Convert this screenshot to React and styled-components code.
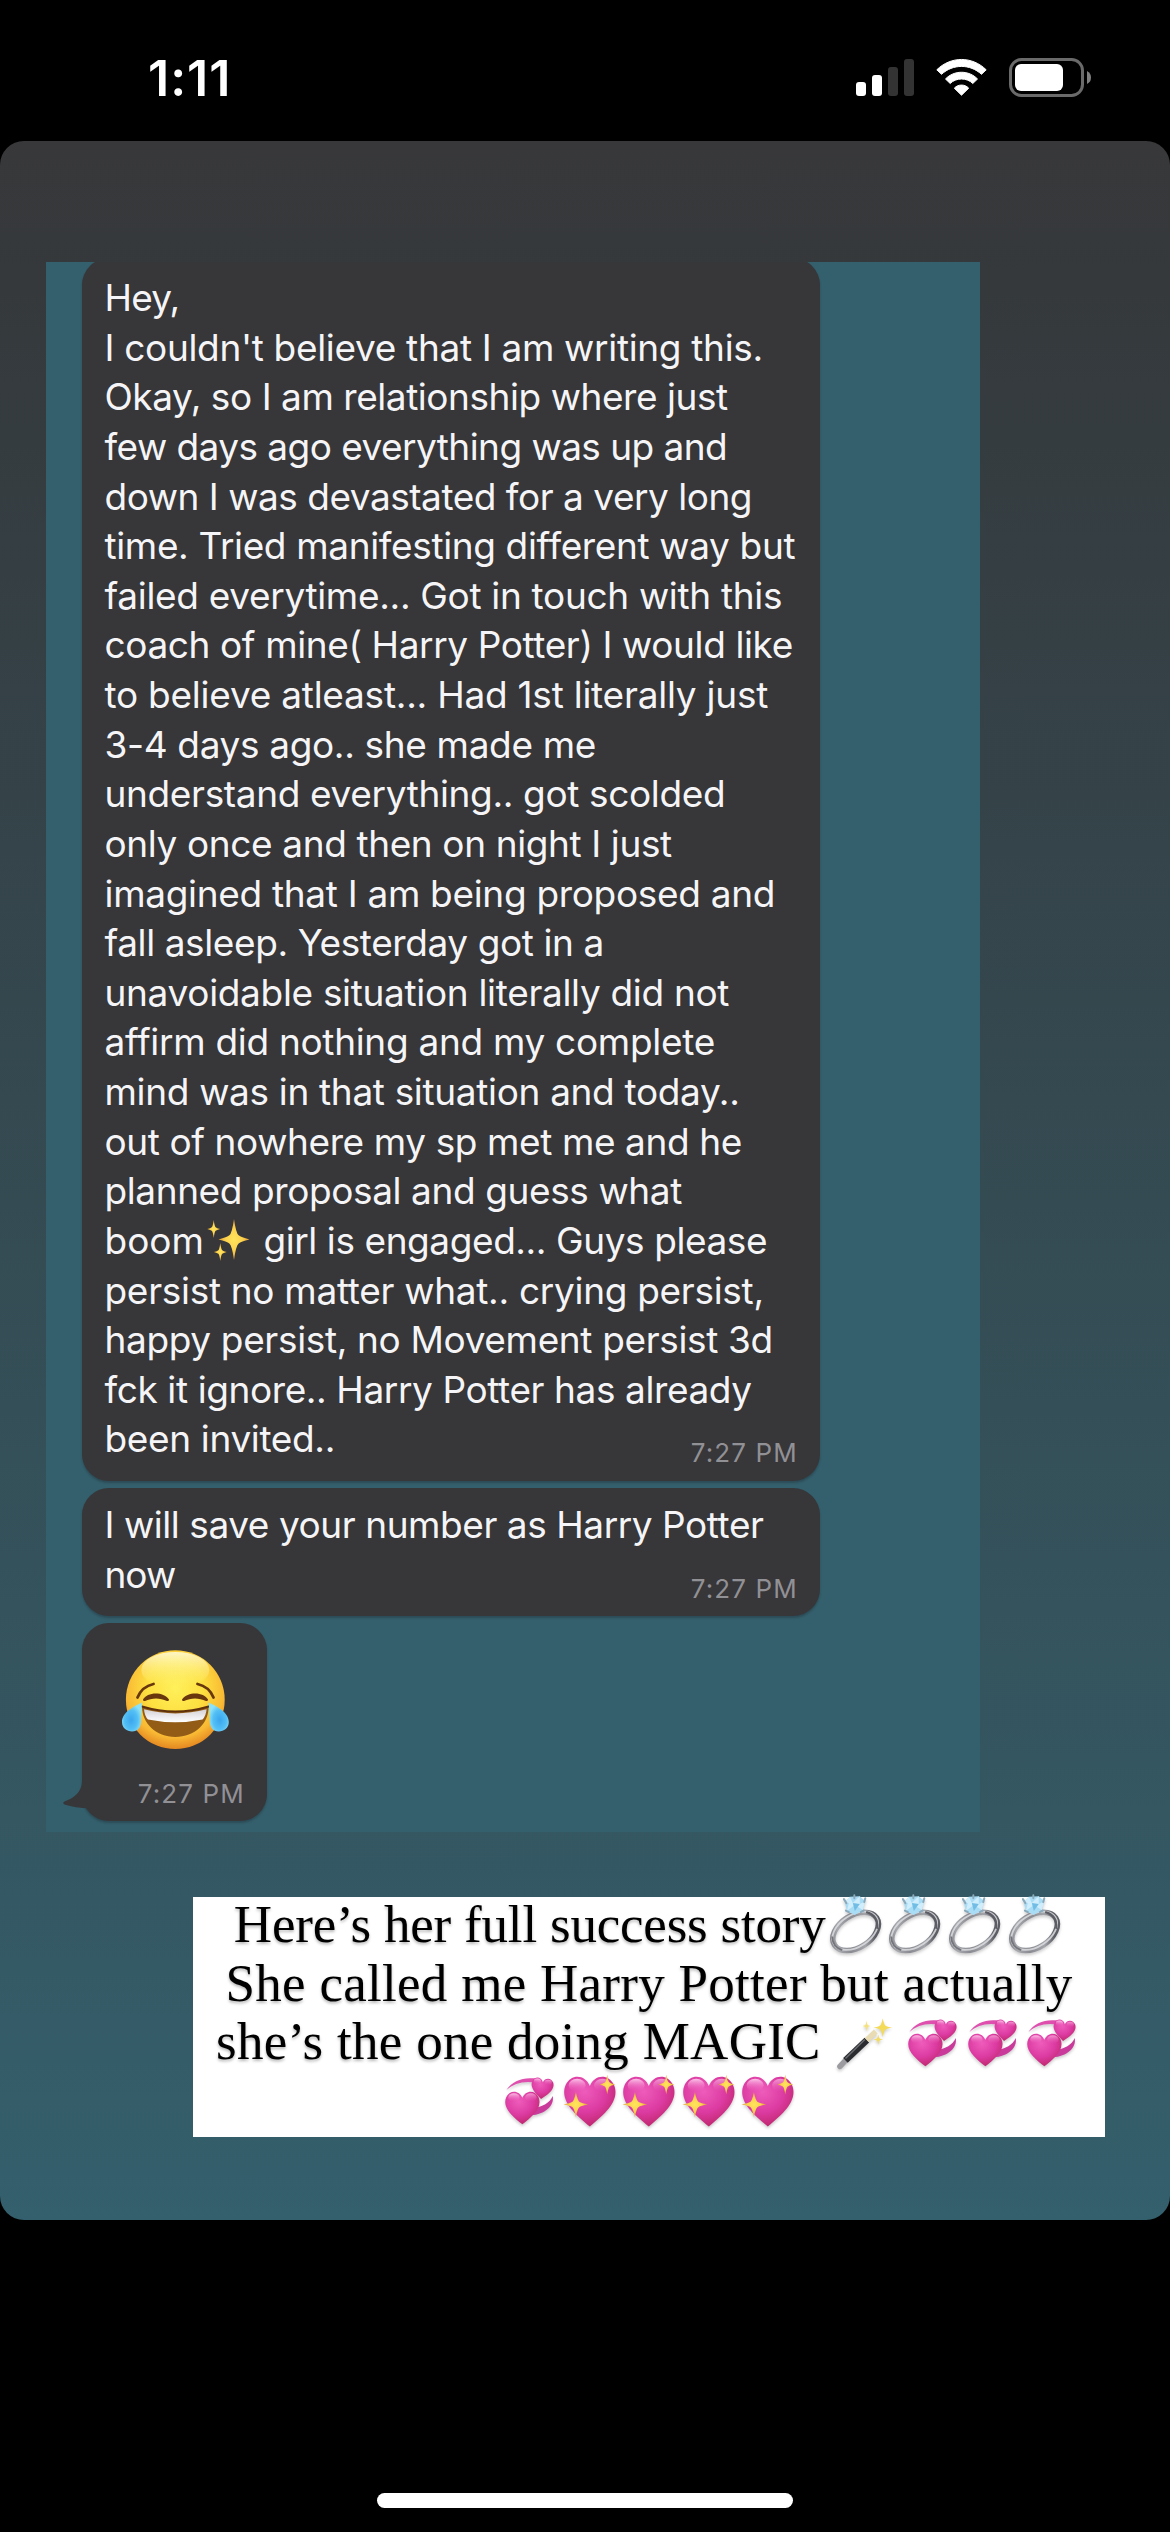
import React from "react"
import styled, { createGlobalStyle } from "styled-components"

const GlobalStyle = createGlobalStyle`
  body {
    margin: 0;
    background: #000;
  }
  svg {
    display: block;
    flex: none;
    overflow: visible;
  }
`

const Screen = styled.div`
  box-sizing: border-box;
  width: 1170px;
  height: 2532px;
  display: flex;
  flex-direction: column;
  background: #000;
  overflow: hidden;
  font-family: Inter, "Liberation Sans", sans-serif;
`

const StatusBar = styled.header`
  box-sizing: border-box;
  height: 141px;
  padding: 47px 79px 0 148px;
  display: flex;
  justify-content: space-between;
  align-items: flex-start;
  .clock {
    color: #fff;
    font-size: 50px;
    line-height: 62px;
    font-weight: 600;
    letter-spacing: 1px;
  }
  .icons {
    display: flex;
    align-items: center;
    padding-top: 11px;
  }
  .wifi {
    margin: 0 22px;
  }
`

const Story = styled.main`
  box-sizing: border-box;
  height: 2079px;
  padding: 121px 65px 0 46px;
  display: flex;
  flex-direction: column;
  border-radius: 24px;
  background: linear-gradient(#38383a 0%, #35393c 7%, #345f6c 100%);
`

const Chat = styled.section`
  box-sizing: border-box;
  width: 934px;
  height: 1570px;
  padding-left: 36px;
  display: flex;
  flex-direction: column;
  align-items: flex-start;
  gap: 7px;
  background: #345f6c;
  overflow: hidden;
`

const Bubble = styled.div`
  position: relative;
  box-sizing: border-box;
  width: ${({ $width }) => $width}px;
  height: ${({ $height }) => $height}px;
  margin-top: ${({ $lift }) => ($lift ? -$lift : 0)}px;
  padding: ${({ $top }) => $top}px 22px 12px 22.5px;
  border-radius: 27px;
  background: #373639;
  box-shadow: 0 2px 2px rgba(30, 40, 48, 0.35);
`

const Line = styled.div`
  height: 49.64px;
  display: flex;
  align-items: flex-start;
  color: #f5f5f7;
  font-size: 37px;
  line-height: 49.64px;
  white-space: pre;
`

const Words = styled.span`
  letter-spacing: ${({ $track }) => $track}px;
`

const Stamp = styled.time`
  margin-left: auto;
  padding-top: ${({ $drop }) => $drop || 0}px;
  color: #919095;
  font-size: 26px;
  line-height: 30px;
  letter-spacing: 1.15px;
`

const Reaction = styled.div`
  height: 100%;
  display: flex;
  flex-direction: column;
  justify-content: space-between;
  .face {
    margin-left: 17px;
  }
`

const Tail = styled.svg`
  position: absolute;
  left: -19px;
  bottom: 9px;
`

const Caption = styled.section`
  box-sizing: border-box;
  width: 912px;
  height: 240px;
  margin: 65px 0 0 147px;
  background: #fff;
  .lines {
    margin-top: -2px;
    display: flex;
    flex-direction: column;
    align-items: center;
  }
`

const CaptionLine = styled.div`
  height: 58.67px;
  display: flex;
  align-items: center;
  color: #000;
  font-family: "Liberation Serif", serif;
  font-size: 53px;
  line-height: 58.67px;
  white-space: pre;
  text-shadow: 0 2px 3px rgba(0, 0, 0, 0.28);
  svg {
    filter: drop-shadow(0 2px 1.5px rgba(0, 0, 0, 0.2));
  }
  .wand {
    margin-right: 9px;
  }
`

const HomeBar = styled.div`
  width: 416px;
  height: 15px;
  margin: 273px auto 0;
  border-radius: 8px;
  background: #fff;
`

// each entry is a line with its letter spacing
const story = [
  ["Hey,", -0.8],
  ["I couldn't believe that I am writing this.", -0.32],
  ["Okay, so I am relationship where just", -0.45],
  ["few days ago everything was up and", -0.55],
  ["down I was devastated for a very long", -0.48],
  ["time. Tried manifesting different way but", -0.36],
  ["failed everytime... Got in touch with this", -0.32],
  ["coach of mine( Harry Potter) I would like", -0.39],
  ["to believe atleast... Had 1st literally just", -0.24],
  ["3-4 days ago.. she made me", -0.34],
  ["understand everything.. got scolded", -0.35],
  ["only once and then on night I just", -0.38],
  ["imagined that I am being proposed and", -0.31],
  ["fall asleep. Yesterday got in a", -0.4],
  ["unavoidable situation literally did not", -0.32],
  ["affirm did nothing and my complete", -0.3],
  ["mind was in that situation and today..", -0.33],
  ["out of nowhere my sp met me and he", -0.4],
  ["planned proposal and guess what", -0.4],
  ["boom", 0, " girl is engaged... Guys please", -0.42],
  ["persist no matter what.. crying persist,", -0.3],
  ["happy persist, no Movement persist 3d", -0.35],
  ["fck it ignore.. Harry Potter has already", -0.4],
  ["been invited..", -0.35],
]

const reply = [
  ["I will save your number as Harry Potter", -0.44],
  ["now", -1],
]

const HEART =
  "M0 -9 C-3 -17 -13 -18 -17 -10 C-22 1 -10 11 0 19 C10 11 22 1 17 -10 C13 -18 3 -17 0 -9Z"

const Star = ({ x, y, rx, ry = rx, fill = "url(#gold)" }) => (
  <path
    transform={`translate(${x} ${y}) scale(${rx} ${ry})`}
    d="M0 -1 Q.13 -.3 .3 -.2 Q.45 -.1 1 0 Q.45 .1 .3 .2 Q.13 .3 0 1 Q-.13 .3 -.3 .2 Q-.45 .1 -1 0 Q-.45 -.1 -.3 -.2 Q-.13 -.3 0 -1Z"
    fill={fill}
  />
)

const Gradients = () => (
  <svg width="0" height="0" aria-hidden="true">
    <defs>
      <radialGradient id="gold">
        <stop offset="0" stopColor="#ffe45c" />
        <stop offset="0.55" stopColor="#fcd14e" />
        <stop offset="1" stopColor="#dd9a35" />
      </radialGradient>
      <radialGradient id="face" cx="0.5" cy="0.38" r="0.64">
        <stop offset="0" stopColor="#fff05a" />
        <stop offset="0.45" stopColor="#fddf40" />
        <stop offset="0.78" stopColor="#f9b934" />
        <stop offset="1" stopColor="#e07f1e" />
      </radialGradient>
      <linearGradient id="shine" x2="0" y2="1">
        <stop offset="0" stopColor="#fffde0" />
        <stop offset="1" stopColor="#fff46e" stopOpacity="0" />
      </linearGradient>
      <linearGradient id="teeth" x2="0" y2="1">
        <stop offset="0" stopColor="#d5d1d6" />
        <stop offset="1" stopColor="#ffffff" />
      </linearGradient>
      <radialGradient id="tear" cx="0.45" cy="0.6" r="0.55">
        <stop offset="0" stopColor="#3aa6ee" />
        <stop offset="0.6" stopColor="#53bff5" />
        <stop offset="1" stopColor="#8ee2f7" />
      </radialGradient>
      <radialGradient id="pink" cx="0.4" cy="0.3" r="0.75">
        <stop offset="0" stopColor="#ee5cbb" />
        <stop offset="0.55" stopColor="#dc3ba1" />
        <stop offset="1" stopColor="#bd2568" />
      </radialGradient>
      <linearGradient id="gloss" x2="0" y2="1">
        <stop offset="0" stopColor="#fbc3e8" />
        <stop offset="1" stopColor="#ee5cbb" stopOpacity="0" />
      </linearGradient>
      <linearGradient id="silver" x2="1" y2="0.4">
        <stop offset="0" stopColor="#72737a" />
        <stop offset="0.25" stopColor="#a9aab0" />
        <stop offset="0.5" stopColor="#8a8b92" />
        <stop offset="0.8" stopColor="#a3a4aa" />
        <stop offset="1" stopColor="#5c5d65" />
      </linearGradient>
    </defs>
  </svg>
)

const Sparkles = () => (
  <svg width="49.5" height="49.64" viewBox="0 0 49.5 49.64">
    <Star x={30} y={23.4} rx={15.5} ry={20.5} />
    <Star x={9.7} y={13} rx={6.5} ry={9} />
    <Star x={16.3} y={36} rx={6.5} ry={9} />
  </svg>
)

const Tear = () => (
  <path d="M20 52.5 C13 56 0 62 0 72 C0 78 5 81.5 10 81.5 C16 81.5 18.5 77.5 19 72 Z" fill="url(#tear)" />
)

const JoyFace = () => (
  <svg className="face" width="107" height="100" viewBox="0 0 107 100">
    <circle cx="53.3" cy="49.7" r="49.4" fill="url(#face)" />
    <ellipse cx="53.3" cy="20" rx="34" ry="18" fill="url(#shine)" opacity="0.85" />
    <g fill="none" stroke="#68370d" strokeLinecap="round">
      <path d="M15.5 47.5 Q20 36.5 31.5 34" strokeWidth="2.8" />
      <path d="M91.5 47.5 Q87 36.5 75.5 34" strokeWidth="2.8" />
    </g>
    <g fill="#68370d">
      <path d="M21 49.5 C25 42 41 41 47 49.5 Q47 51.5 45 51 C38 47.5 30 47.5 23 51 Q21 51.5 21 49.5Z" />
      <path d="M60 49.5 C66 41 82 42 86 49.5 Q86 51.5 84 51 C77 47.5 69 47.5 62 51 Q60 51.5 60 49.5Z" />
    </g>
    <path d="M20 56.5 Q53.3 66.5 86.6 56.5 C87 73 73 87 53.3 87 C34 87 20 73 20 56.5Z" fill="#925c17" />
    <path d="M20 56.5 Q53.3 66.5 86.6 56.5" fill="none" stroke="#5f300c" strokeWidth="2" strokeLinecap="round" />
    <path d="M22 59.3 Q53.3 67.5 84.6 59.3 Q84 66 80.5 69.5 Q53.3 75 26 69.5 Q22.5 66 22 59.3Z" fill="url(#teeth)" />
    <Tear />
    <g transform="translate(106.8 0) scale(-1 1)">
      <Tear />
    </g>
  </svg>
)

const Ring = () => (
  <svg width="59.67" height="60" viewBox="0 0 60 60">
    <g transform="rotate(-33 29.5 37)" fill="none">
      <ellipse cx="29.5" cy="37.5" rx="25.2" ry="16.2" stroke="url(#silver)" strokeWidth="5.6" />
      <ellipse cx="29.5" cy="36.8" rx="25.4" ry="16" stroke="#dcdde1" strokeWidth="1.8" opacity="0.85" />
      <path d="M49 27 Q58 37 49 47" stroke="#5b5c64" strokeWidth="2" />
      <path d="M8 46 Q1.5 38 7 29" stroke="#74757c" strokeWidth="1.8" />
    </g>
    <path d="M19 8 L24 2.5 L34 2 L39.5 7 L37 16 L29 21 L21 17Z" fill="#a9dcf5" />
    <path d="M24 2.5 L27 9 L34 2 L34 10 L39.5 7 L37 16 L29 11 L21 17 L23 9 L19 8Z" fill="#d0edfb" />
    <path d="M27 9 L34 10 L29 17Z" fill="#72bde6" />
    <path
      d="M18 5 l2.5 4 M39.5 4 l-1 4 M23 18 l-3 -1.5 M35 18 l3 -1.5 M28.5 1 v3"
      stroke="#8aa9bb"
      strokeWidth="2"
      strokeLinecap="round"
    />
  </svg>
)

const Wand = () => (
  <svg className="wand" width="59.67" height="60" viewBox="0 0 60 60">
    <path d="M6 54.5 L13 47" stroke="#9b9ba0" strokeWidth="5.6" strokeLinecap="round" />
    <path d="M11.5 48.5 L33 28" stroke="#2b2c30" strokeWidth="6.6" />
    <path d="M11.5 46.5 L31 27.5" stroke="#6d6e73" strokeWidth="1.4" />
    <path d="M33 28 L42 19.5" stroke="#e9dcb3" strokeWidth="5.4" />
    <Star x={49} y={15.5} rx={9.5} fill="#f3da57" />
    <Star x={32.7} y={14} rx={4} ry={5.5} fill="#f5e27c" />
    <Star x={44.5} y={27.5} rx={5} fill="#f3dc66" />
  </svg>
)

const Heart = ({ transform }) => (
  <g transform={transform}>
    <path d={HEART} fill="url(#pink)" />
    <ellipse cx="-9" cy="-9.5" rx="6" ry="4.5" fill="url(#gloss)" />
    <ellipse cx="9" cy="-9.5" rx="6" ry="4.5" fill="url(#gloss)" opacity="0.7" />
  </g>
)

const RevolvingHearts = () => (
  <svg width="59.67" height="60" viewBox="0 0 60 60">
    <path d="M6.5 20 C12 11 24 6.5 36 8.5 L36 12.5 C24 10.5 14 13 6.5 20Z" fill="#df4fae" />
    <path d="M53 26 C55 36 45 44.5 31 45.5 L33 38 C43 37 50 33 53 26Z" fill="#c93a9b" />
    <Heart transform="translate(42.5 17.5) rotate(6) scale(0.61)" />
    <Heart transform="translate(22.5 36.4) scale(0.95)" />
  </svg>
)

const SparklingHeart = () => (
  <svg width="59.67" height="60" viewBox="0 0 60 60">
    <Heart transform="translate(30 29) scale(1.42 1.45)" />
    <Star x={16} y={34.5} rx={12.5} />
    <Star x={47.5} y={14.5} rx={8} ry={10} />
  </svg>
)

const repeat = (Icon, count) =>
  Array.from({ length: count }, (_, i) => <Icon key={i} />)

const Message = ({ lines, ...rest }) => (
  <Bubble $width={738} {...rest}>
    {lines.map(([text, track, after, afterTrack], i) => (
      <Line key={text}>
        <Words $track={track}>{text}</Words>
        {after && <Sparkles />}
        {after && <Words $track={afterTrack}>{after}</Words>}
        {i === lines.length - 1 && <Stamp $drop={24}>7:27 PM</Stamp>}
      </Line>
    ))}
  </Bubble>
)

const App = () => {
  return (
    <Screen>
      <GlobalStyle />
      <StatusBar>
        <span className="clock">1:11</span>
        <div className="icons">
          <svg width="58" height="37" viewBox="0 0 58 37">
            <rect x="0" y="23" width="10" height="14" rx="3" fill="#fff" />
            <rect x="16" y="16" width="10" height="21" rx="3" fill="#fff" />
            <rect x="32" y="8" width="10" height="29" rx="3" fill="#333" />
            <rect x="48" y="0" width="10" height="37" rx="3" fill="#333" />
          </svg>
          <svg className="wifi" width="51" height="37" viewBox="0 0 51 37">
            <g fill="#fff" stroke="#fff" strokeWidth="1" strokeLinejoin="round">
              <path d="M.8 10.8 C15 -3 36 -3 50.2 10.8 L45.5 15.3 C34 4.8 17 4.8 5.5 15.3Z" />
              <path d="M9.5 20 C18 11 33 11 41.5 20 L36.8 24.5 C31 18.5 20 18.5 14.2 24.5Z" />
              <path d="M18.3 29.2 C22 25 29 25 32.7 29.2 L25.5 36.2Z" />
            </g>
          </svg>
          <svg width="82" height="39" viewBox="0 0 82 39">
            <rect x="1.5" y="1.5" width="72" height="36" rx="11" fill="none" stroke="#6a6a6a" strokeWidth="3" />
            <rect x="6" y="6" width="48" height="27" rx="6" fill="#fff" />
            <path d="M78 13 Q82 15 82 19.5 Q82 24 78 26Z" fill="#808080" />
          </svg>
        </div>
      </StatusBar>
      <Story>
        <Chat>
          <Message lines={story} $height={1223} $lift={4} $top={15} />
          <Message lines={reply} $height={128} $top={12.4} />
          <Bubble $width={185} $height={198} $top={27}>
            <Tail width="28" height="28" viewBox="0 0 28 28">
              <path d="M19 -2 C18.500 8 11 14 1.5 17.5 Q-1 19 1.5 20.5 Q12 24 27 24.5 L27 -2Z" fill="#373639" />
            </Tail>
            <Reaction>
              <JoyFace />
              <Stamp>7:27 PM</Stamp>
            </Reaction>
          </Bubble>
        </Chat>
        <Caption>
          <div className="lines">
            <CaptionLine>
              <Words $track={-0.2}>Here’s her full success story</Words>
              {repeat(Ring, 4)}
            </CaptionLine>
            <CaptionLine>
              <Words $track={0.28}>She called me Harry Potter but actually</Words>
            </CaptionLine>
            <CaptionLine>
              <Words $track={0.28}>she’s the one doing MAGIC </Words>
              <Wand />
              {repeat(RevolvingHearts, 3)}
            </CaptionLine>
            <CaptionLine>
              <RevolvingHearts />
              {repeat(SparklingHeart, 4)}
            </CaptionLine>
          </div>
        </Caption>
      </Story>
      <HomeBar />
      <Gradients />
    </Screen>
  )
}

export default App
